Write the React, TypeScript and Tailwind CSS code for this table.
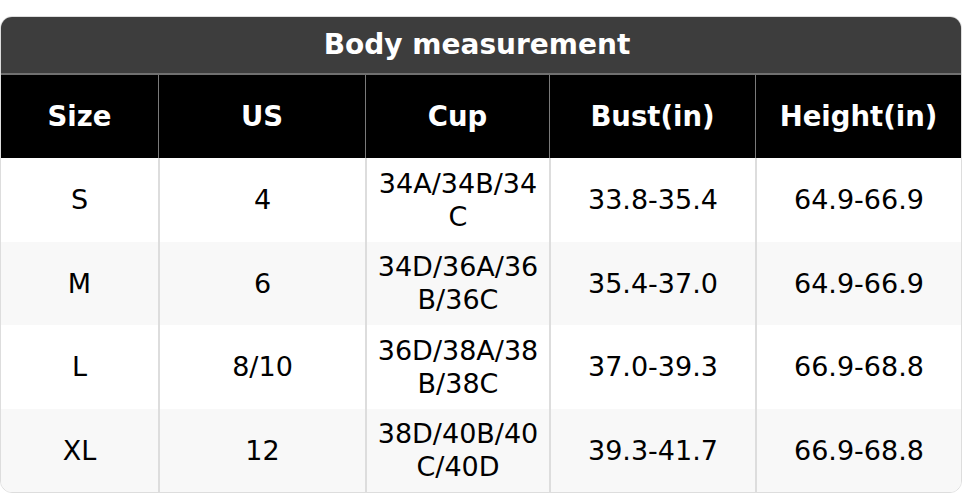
import React from "react";

const rows = [
  ["S", "4", "34A/34B/34C", "33.8-35.4", "64.9-66.9"],
  ["M", "6", "34D/36A/36B/36C", "35.4-37.0", "64.9-66.9"],
  ["L", "8/10", "36D/38A/38B/38C", "37.0-39.3", "66.9-68.8"],
  ["XL", "12", "38D/40B/40C/40D", "39.3-41.7", "66.9-68.8"],
];

const headers = ["Size", "US", "Cup", "Bust(in)", "Height(in)"];

export default function App() {
  return (
    <div className="w-[962px] h-[496px] bg-white pt-4" style={{ fontFamily: '"DejaVu Sans", "Liberation Sans", sans-serif' }}>
      <div className="rounded-xl overflow-hidden border border-[#dddddd]">
        <div className="h-[56px] bg-[#3d3d3d] text-white font-bold text-[28px] flex items-center justify-center pr-2">
          Body measurement
        </div>
        <div className="grid grid-cols-[157px_207px_184px_206px_206px] bg-black border-t-2 border-[#707070] h-[85px]">
          {headers.map((h, i) => (
            <div
              key={h}
              className={`flex items-center justify-center text-white font-bold text-[27.5px] ${i > 0 ? "border-l border-[#7a7a7a]" : ""}`}
            >
              {h}
            </div>
          ))}
        </div>
        {rows.map((r, ri) => (
          <div
            key={ri}
            className={`grid grid-cols-[157px_207px_184px_206px_206px] h-[83.5px] ${ri % 2 === 1 ? "bg-[#f8f8f8]" : "bg-white"}`}
          >
            {r.map((c, i) => (
              <div
                key={i}
                className={`flex items-center justify-center text-center text-black text-[27px] leading-[33px] px-2 break-all ${i > 0 ? "border-l-2 border-[#dddddd]" : ""}`}
              >
                {c}
              </div>
            ))}
          </div>
        ))}
      </div>
    </div>
  );
}
